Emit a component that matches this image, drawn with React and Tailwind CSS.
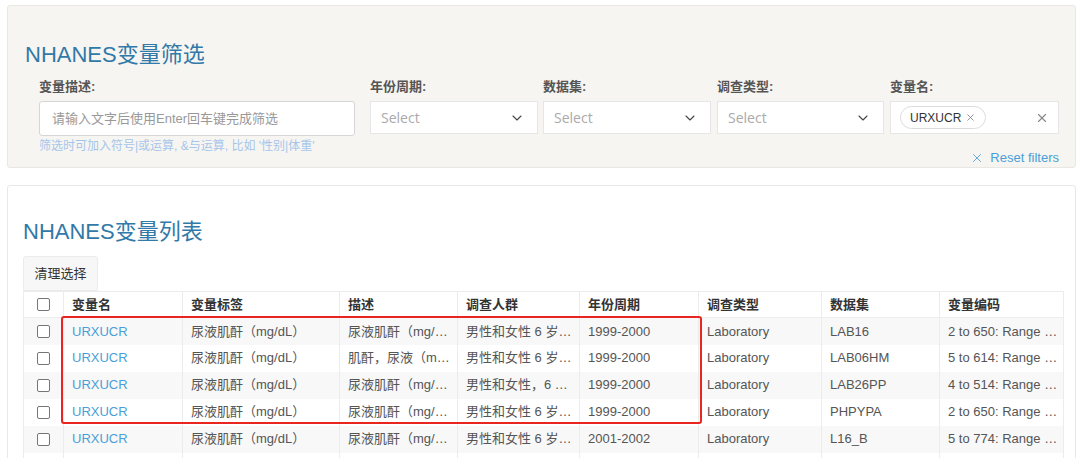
import React from "react";
import { ChevronDown, X } from "lucide-react";

const FONT = { fontFamily: '"Liberation Sans", Arial, "Noto Sans CJK SC", sans-serif' };

const rows = [
  ["URXUCR", "尿液肌酐（mg/dL）", "尿液肌酐（mg/dL）", "男性和女性 6 岁及以上", "1999-2000", "Laboratory", "LAB16", "2 to 650: Range of Values"],
  ["URXUCR", "尿液肌酐（mg/dL）", "肌酐，尿液（mg/dL）", "男性和女性 6 岁及以上", "1999-2000", "Laboratory", "LAB06HM", "5 to 614: Range of Values"],
  ["URXUCR", "尿液肌酐（mg/dL）", "尿液肌酐（mg/dL）", "男性和女性，6 岁及以上", "1999-2000", "Laboratory", "LAB26PP", "4 to 514: Range of Values"],
  ["URXUCR", "尿液肌酐（mg/dL）", "尿液肌酐（mg/dL）", "男性和女性 6 岁及以上", "1999-2000", "Laboratory", "PHPYPA", "2 to 650: Range of Values"],
  ["URXUCR", "尿液肌酐（mg/dL）", "尿液肌酐（mg/dL）", "男性和女性 6 岁及以上", "2001-2002", "Laboratory", "L16_B", "5 to 774: Range of Values"],
  ["URXUCR", "尿液肌酐（mg/dL）", "尿液肌酐（mg/dL）", "男性和女性 6 岁及以上", "2001-2002", "Laboratory", "L11_B", "5 to 774: Range of Values"],
];

const headers = ["变量名", "变量标签", "描述", "调查人群", "年份周期", "调查类型", "数据集", "变量编码"];
const widths = [40, 119, 157, 118, 122, 119, 123, 118, 124];

const Checkbox = () => (
  <div className="w-[13px] h-[13px] border border-[#767676] rounded-[2px] bg-white mx-auto" />
);

const SelectBox = ({ label, width }) => (
  <div className="flex flex-col" style={{ width }}>
    <label className="text-[13px] leading-[16px] font-bold text-[#555] mb-[6px]">{label}</label>
    <div className="h-[33px] bg-white border border-[#e6e6e6] flex items-center justify-between pl-[10px] pr-[12px]">
      <span className="text-[14px] text-[#aaa]" style={{ fontFamily: '"Open Sans", sans-serif' }}>
        Select
      </span>
      <ChevronDown size={16} strokeWidth={1.6} className="text-[#444]" />
    </div>
  </div>
);

export default function App() {
  return (
    <div className="bg-white min-h-screen pt-[5px] pl-[7px] pr-[4px]" style={FONT}>
      {/* filter panel */}
      <div className="bg-[#f7f5f1] border border-[#e9e7e2] rounded-[3px] pt-[34px] pb-px">
        <h2 className="text-[22px] leading-[30px] text-[#3179a8] pl-[17px]">NHANES变量筛选</h2>
        <div className="flex pl-[31px] mt-[9px]">
          <div className="flex flex-col w-[316px] mr-[15px]">
            <label className="text-[13px] leading-[16px] font-bold text-[#555] mb-[6px]">变量描述:</label>
            <div className="h-[35px] bg-white border border-[#d6d6d6] rounded-[3px] flex items-center px-[12px]">
              <span className="text-[13px] text-[#999]">请输入文字后使用Enter回车键完成筛选</span>
            </div>
            <p className="text-[12px] leading-[14px] text-[#a6c5ea] mt-[3px]">
              筛选时可加入符号|或运算, &amp;与运算, 比如 '性别|体重'
            </p>
          </div>
          <SelectBox label="年份周期:" width={168} />
          <div className="w-[5px]" />
          <SelectBox label="数据集:" width={168} />
          <div className="w-[6px]" />
          <SelectBox label="调查类型:" width={167} />
          <div className="w-[6px]" />
          <div className="flex flex-col w-[169px]">
            <label className="text-[13px] leading-[16px] font-bold text-[#555] mb-[6px]">变量名:</label>
            <div className="h-[33px] bg-white border border-[#e6e6e6] flex items-center justify-between pl-[9px] pr-[9px]">
              <span className="h-[23px] rounded-full border border-[#dcdcdc] flex items-center gap-[4px] px-[9px] text-[12px] text-[#333]">
                URXUCR
                <X size={11} strokeWidth={2} className="text-[#888]" />
              </span>
              <X size={14} strokeWidth={2} className="text-[#888]" />
            </div>
            <div className="flex justify-end items-center gap-[6px] mt-[16px] leading-[16px] text-[13px] text-[#4a9fd8]">
              <X size={14} strokeWidth={1.5} />
              <span>Reset filters</span>
            </div>
          </div>
        </div>
      </div>

      {/* list panel */}
      <div className="mt-[17px] bg-white border border-[#e8e8e8] rounded-[3px] pt-[31px] px-[15px] pb-[20px]">
        <h2 className="text-[22px] leading-[30px] text-[#3179a8]">NHANES变量列表</h2>
        <button className="mt-[9px] h-[35px] w-[75px] bg-[#f7f7f7] border border-[#ececec] rounded-t-[3px] text-[13px] text-[#333]">
          清理选择
        </button>
        <div className="relative">
          <table className="table-fixed border-collapse w-[1040px] text-[13px]">
            <colgroup>
              {widths.map((w, i) => (
                <col key={i} style={{ width: w }} />
              ))}
            </colgroup>
            <thead>
              <tr className="h-[26px] bg-white">
                <th className="border border-[#ececec]">
                  <Checkbox />
                </th>
                {headers.map((h) => (
                  <th key={h} className="border border-[#ececec] text-left font-bold text-[#333] px-[8px]">
                    {h}
                  </th>
                ))}
              </tr>
            </thead>
            <tbody>
              {rows.map((r, i) => (
                <tr key={i} className={`h-[27px] ${i % 2 === 0 ? "bg-[#f8f8f8]" : "bg-white"}`}>
                  <td className="border-x border-[#ececec]">
                    <Checkbox />
                  </td>
                  {r.map((c, j) => (
                    <td
                      key={j}
                      className={`border-x border-[#ececec] pl-[8px] pr-[3px] truncate ${j === 0 ? "text-[#4a9fd8]" : "text-[#555]"}`}
                    >
                      {c}
                    </td>
                  ))}
                </tr>
              ))}
            </tbody>
          </table>
          {/* highlight box */}
          <div className="absolute left-[38px] top-[25px] w-[641px] h-[108px] border-2 border-[#e8261f] rounded-[3px] pointer-events-none" />
        </div>
      </div>
    </div>
  );
}
